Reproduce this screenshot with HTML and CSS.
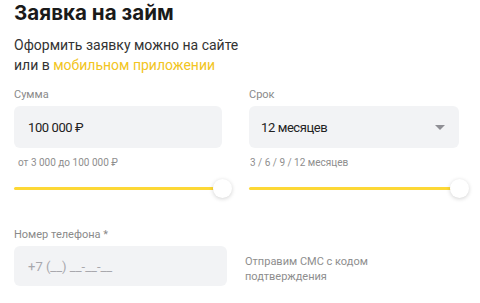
FILE: index.html
```html
<!DOCTYPE html>
<html lang="ru">
<head>
<meta charset="utf-8">
<link rel="stylesheet" href="styles.css">
</head>
<body>
<main class="page">
  <h1 class="title">Заявка на займ</h1>
  <p class="lead">Оформить заявку можно на сайте<br>или в <a class="link" href="#">мобильном приложении</a></p>

  <div class="grid">
    <div class="field field-sum">
      <div class="label">Сумма</div>
      <div class="input"><span class="value">100 000 ₽</span></div>
      <div class="hint">от 3 000 до 100 000 ₽</div>
      <div class="slider"><div class="track"></div><div class="knob"></div></div>
    </div>
    <div class="field field-term">
      <div class="label">Срок</div>
      <div class="input select"><span class="value">12 месяцев</span><span class="caret"></span></div>
      <div class="hint">3 / 6 / 9 / 12 месяцев</div>
      <div class="slider"><div class="track"></div><div class="knob"></div></div>
    </div>
  </div>

  <div class="phone-row">
    <div class="field field-phone">
      <div class="label">Номер телефона *</div>
      <div class="input phone"><span class="placeholder">+7 (__) __-__-__</span></div>
    </div>
    <div class="sms">Отправим СМС с кодом<br>подтверждения</div>
  </div>
</main>
</body>
</html>
```
FILE: styles.css
```css
html, body {
  margin: 0;
  padding: 0;
  background: #ffffff;
}
body {
  font-family: Roboto, "Noto Sans", "DejaVu Sans", sans-serif;
  color: #333333;
  width: 480px;
  height: 303px;
  overflow: hidden;
}
.page {
  padding: 0 0 0 14px;
}
.title {
  margin: 0;
  padding-top: 1px;
  font-family: Inter, Roboto, sans-serif;
  font-size: 20.6px;
  line-height: 24px;
  font-weight: 700;
  color: #1a1a1a;
}
.lead {
  margin: 10px 0 0 0;
  font-size: 14px;
  line-height: 20px;
  color: #333333;
}
.link {
  color: #f2c522;
  text-decoration: none;
}
.grid {
  display: grid;
  grid-template-columns: 208px 210px;
  column-gap: 27px;
  margin-top: 13px;
}
.label {
  font-size: 11px;
  line-height: 14px;
  color: #8a8a8a;
  margin-bottom: 4px;
}
.input {
  box-sizing: border-box;
  height: 42px;
  background: #f2f3f5;
  border-radius: 6px;
  display: flex;
  align-items: center;
  padding-left: 14px;
  font-size: 13px;
  letter-spacing: -0.4px;
  color: #222222;
}
.field-term .input {
  padding-left: 12px;
}
.select {
  justify-content: space-between;
  padding-right: 14px;
}
.caret {
  width: 0;
  height: 0;
  border-left: 5px solid transparent;
  border-right: 5px solid transparent;
  border-top: 5px solid #8f8f95;
}
.hint {
  font-size: 10px;
  line-height: 12px;
  color: #8e8e8e;
  margin-top: 9px;
  padding-left: 4px;
}
.field-term .hint {
  padding-left: 1px;
}
.slider {
  position: relative;
  height: 19px;
  margin-top: 10px;
}
.track {
  position: absolute;
  left: 0;
  right: 8px;
  top: 8px;
  height: 3px;
  background: #fdd835;
  border-radius: 2px;
}
.knob {
  position: absolute;
  right: -10px;
  top: 0;
  width: 19px;
  height: 19px;
  border-radius: 50%;
  background: #ffffff;
  box-shadow: 0 1px 4px rgba(0, 0, 0, 0.18);
}
.phone-row {
  display: flex;
  align-items: flex-start;
  gap: 18px;
  margin-top: 30px;
}
.field-phone {
  width: 213px;
}
.field-phone .label {
  margin-bottom: 4px;
}
.phone {
  height: 40px;
  letter-spacing: 0;
}
.placeholder {
  color: #a8a8ad;
  font-size: 13px;
}
.sms {
  margin-top: 26px;
  font-size: 11px;
  line-height: 15px;
  color: #8e8e8e;
}
```
